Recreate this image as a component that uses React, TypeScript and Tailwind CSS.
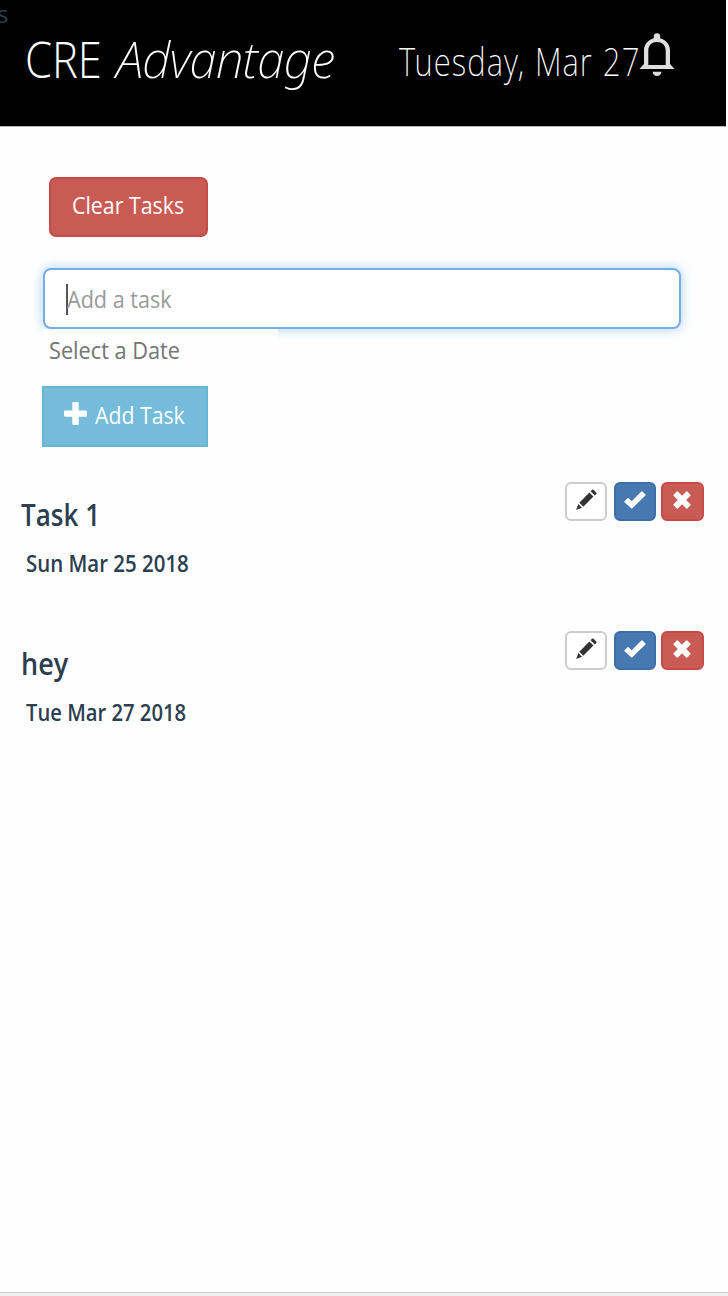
import type { ReactNode } from "react";

function Pencil() {
  return (
    <svg viewBox="0 0 22 22" className="h-[22px] w-[22px] fill-[#333]">
      <path d="M17 .8a1.100 1.100 0 0 1 1.600 0l2.600 2.600a1.100 1.100 0 0 1 0 1.600l-1.400 1.400-4.200-4.200z" />
      <path d="M14.400 3.600l4 4L8.300 17.700l-4-4z" />
      <path d="M3.300 15l3.700 3.700-5.800 2.200z" />
    </svg>
  );
}

function Check() {
  return (
    <svg viewBox="0 0 22 18" className="mt-px h-[18px] w-[22px] fill-white">
      <path d="M.5 10.200l3-3a.8.8 0 0 1 1.100 0l3.100 3L17.400.5a.8.8 0 0 1 1.100 0l2.900 2.900a.8.8 0 0 1 0 1.100L8.300 17.300a.8.8 0 0 1-1.100 0L.5 11.300a.8.8 0 0 1 0-1.100z" />
    </svg>
  );
}

function Cross() {
  return (
    <svg viewBox="0 0 18 18" className="mr-[2px] h-[18px] w-[18px] fill-white">
      <path d="M3.700.6a.8.8 0 0 1 1.100 0L9 4.800 13.200.6a.8.8 0 0 1 1.100 0l3.100 3.100a.8.8 0 0 1 0 1.100L13.200 9l4.200 4.200a.8.8 0 0 1 0 1.100l-3.100 3.100a.8.8 0 0 1-1.100 0L9 13.200l-4.200 4.200a.8.8 0 0 1-1.100 0L.6 14.300a.8.8 0 0 1 0-1.100L4.800 9 .6 4.800a.8.8 0 0 1 0-1.100z" />
    </svg>
  );
}

function Plus() {
  return (
    <svg viewBox="0 0 23 23" className="-mt-0.5 h-[23px] w-[23px] shrink-0 fill-white">
      <path d="M9.500 0h4q1.200 0 1.200 1.200v7.300h7.100Q23 8.500 23 9.700v3.800q0 1.200-1.200 1.200h-7.100v7.100q0 1.200-1.200 1.200h-4q-1.200 0-1.200-1.200v-7.100H1.200Q0 14.700 0 13.500V9.700Q0 8.500 1.200 8.500h7.100V1.200Q8.300 0 9.500 0z" />
    </svg>
  );
}

function Bell() {
  return (
    <svg viewBox="0 0 36 44" className="mt-[33px] h-11 w-9 shrink-0 fill-[#dedede]">
      <path
        fillRule="evenodd"
        d="M18 .3a3.200 3.200 0 0 1 3.200 3.200v1.800C27 6.800 31 11.500 31 17.500V31l4.600 5H.4L5 31V17.500C5 11.500 9 6.800 14.800 5.300V3.500A3.200 3.200 0 0 1 18 .3zM9.300 32h17.400V17.500c0-5.300-3.700-8.600-8.700-8.600s-8.700 3.300-8.700 8.600z"
      />
      <path d="M13.600 38.800h8.800c0 2.500-2 4.200-4.400 4.200s-4.400-1.700-4.400-4.200z" />
    </svg>
  );
}

function IconButton({ label, className, children }: { label: string; className: string; children: ReactNode }) {
  return (
    <button
      aria-label={label}
      className={`flex h-[39px] shrink-0 items-center justify-center rounded-[6px] border-2 pb-1 ${className}`}
    >
      {children}
    </button>
  );
}

interface TaskProps {
  name: string;
  date: string;
  nameScale: string;
  dateScale: string;
}

function Task({ name, date, nameScale, dateScale }: TaskProps) {
  return (
    <li className="flex h-[149px] items-start pl-[21px] pr-6 font-semibold text-[#2c3e50]">
      <div className="grow">
        <h3 className={`mt-[11px] w-fit origin-left text-[31px] leading-[42px] ${nameScale}`}>{name}</h3>
        <p className={`ml-[5px] mt-3 w-fit origin-left text-[23.5px] leading-8 ${dateScale}`}>{date}</p>
      </div>
      <IconButton label="Edit" className="mr-[7px] w-[42px] border-[#ccc] bg-white">
        <Pencil />
      </IconButton>
      <IconButton label="Complete" className="mr-[5px] w-[42px] border-[#3d6fa7] bg-[#4679b2]">
        <Check />
      </IconButton>
      <IconButton label="Delete" className="w-[43px] border-[#c64a45] bg-[#c95b55]">
        <Cross />
      </IconButton>
    </li>
  );
}

export default function App() {
  return (
    <div className="flex h-[1296px] w-[728px] flex-col overflow-hidden bg-[#fefefe] font-['Open_Sans','Noto_Sans',sans-serif] text-2xl">
      <header className="relative flex h-[127px] w-[726px] shrink-0 items-start border-b border-[#b5b5b5] bg-black text-white">
        <span className="absolute left-[-3px] top-0 text-2xl leading-[27px] text-[#2c3e50]">s</span>
        <h1 className="ml-[23px] mt-6 flex h-[70px] w-[376px] whitespace-pre text-[50px] font-light leading-[70px]">
          <span className="ml-[2px] w-[91px] origin-left scale-x-[0.87]">CRE</span>
          <em className="origin-left scale-x-[0.985] font-['Noto_Sans'] font-extralight tracking-[-0.8px]">
            Advantage
          </em>
        </h1>
        <div className="mt-[34px] w-[240px] shrink-0">
          <time className="block w-[294px] origin-left scale-x-[0.82] whitespace-nowrap font-['Noto_Sans'] text-[38px] font-extralight leading-[54px] tracking-[1.3px] [word-spacing:1px]">
            Tuesday, Mar 27
          </time>
        </div>
        <Bell />
      </header>

      <main className="grow">
        <button className="ml-[49px] mt-[50px] flex h-[60px] w-[159px] items-center justify-center rounded-[7px] border-2 border-[#c64a45] bg-[#c95b55] pb-1 text-white">
          <span className="scale-x-[0.89] whitespace-nowrap">Clear Tasks</span>
        </button>

        <div className="ml-[43px] mt-[31px] flex h-[61px] w-[638px] items-center rounded-[8px] border-2 border-[#75aee6] bg-white pl-[21px] text-[#999] shadow-[0_0_12px_rgba(102,175,233,0.55)]">
          <span className="mt-[2px] h-[31px] w-[2px] bg-[#555]" />
          <span className="-ml-px origin-left scale-x-90">Add a task</span>
        </div>

        <div className="relative ml-[43px] flex h-[57px] w-[235px] items-start bg-[#fefefe] pl-[6px] pt-[3px] leading-9 text-[#757575]">
          <span className="origin-left scale-x-[0.905]">Select a Date</span>
        </div>

        <button className="ml-[42px] flex h-[61px] w-[166px] items-center border-2 border-[#66b5d5] bg-[#75bcdb] pb-1 pl-5 text-white">
          <Plus />
          <span className="ml-[8px] origin-left scale-x-[0.885] whitespace-nowrap">Add Task</span>
        </button>

        <ul className="mt-[35px]">
          <Task name="Task 1" date="Sun Mar 25 2018" nameScale="scale-x-[0.84]" dateScale="scale-x-[0.87]" />
          <Task name="hey" date="Tue Mar 27 2018" nameScale="scale-x-[0.87]" dateScale="scale-x-[0.86]" />
        </ul>
      </main>

      <footer className="h-1 shrink-0 border-t border-[#ccc] bg-[#f0f0f0]" />
    </div>
  );
}
